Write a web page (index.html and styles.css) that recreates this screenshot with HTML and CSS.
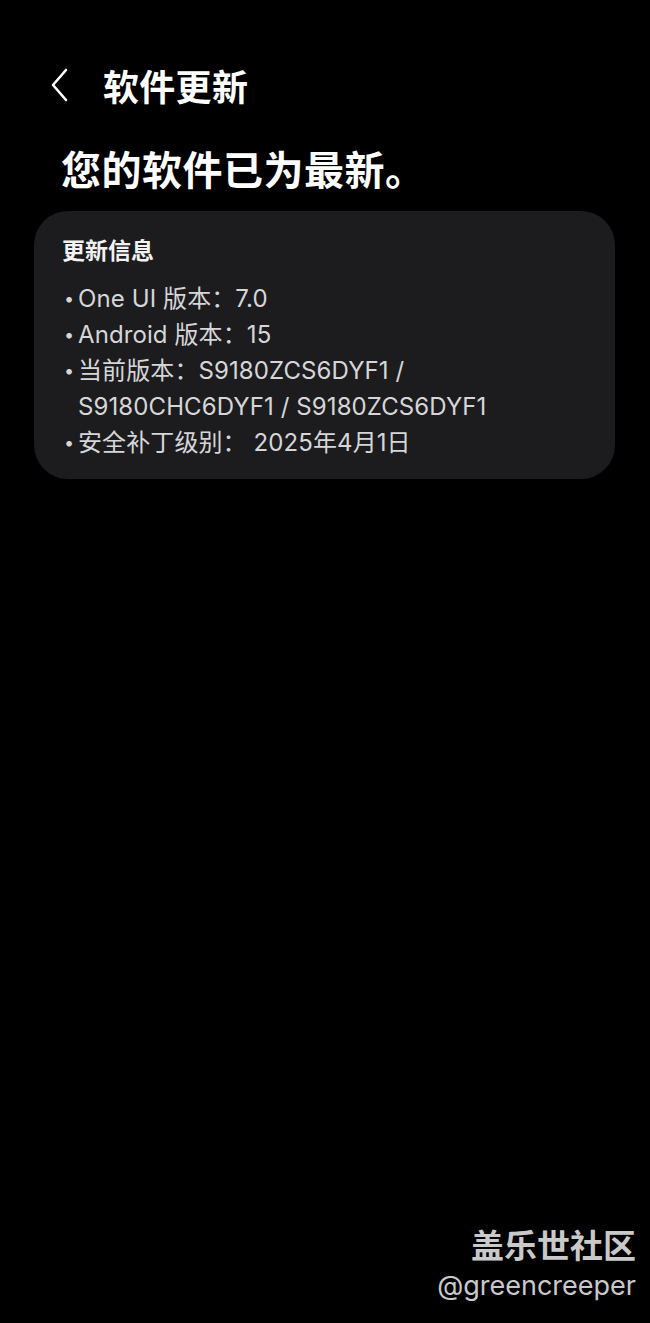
FILE: index.html
```html
<!DOCTYPE html>
<html lang="zh-CN">
<head>
<meta charset="utf-8">
<title>软件更新</title>
<link rel="stylesheet" href="styles.css">
</head>
<body>
<div class="screen">
  <header class="topbar">
    <svg class="back" width="20" height="34" viewBox="0 0 20 34"><path d="M16 2 L3 17 L16 32" fill="none" stroke="#ffffff" stroke-width="2.6" stroke-linecap="round" stroke-linejoin="round"/></svg>
    <span class="title">软件更新</span>
  </header>
  <h1 class="status">您的软件已为最新。</h1>
  <section class="card">
    <h2 class="card-title">更新信息</h2>
    <ul class="info">
      <li><span class="dot">•</span><span>One UI 版本：7.0</span></li>
      <li><span class="dot">•</span><span>Android 版本：15</span></li>
      <li><span class="dot">•</span><span>当前版本：S9180ZCS6DYF1 / S9180CHC6DYF1 / S9180ZCS6DYF1</span></li>
      <li><span class="dot">•</span><span>安全补丁级别： 2025年4月1日</span></li>
    </ul>
  </section>
  <div class="spacer"></div>
  <footer class="watermark">
    <div class="wm-name">盖乐世社区</div>
    <div class="wm-user">@greencreeper</div>
  </footer>
</div>
</body>
</html>
```
FILE: styles.css
```css
html, body {
  margin: 0;
  padding: 0;
  background: #000;
}
body {
  font-family: Inter, "Noto Sans CJK SC", "Noto Sans", sans-serif;
  color: #fff;
}
.screen {
  width: 650px;
  height: 1323px;
  display: flex;
  flex-direction: column;
  box-sizing: border-box;
}
.topbar {
  display: flex;
  align-items: center;
  height: 50px;
  margin-top: 60px;
  padding-left: 50px;
}
.back {
  display: block;
}
.title {
  margin-left: 33px;
  font-size: 36px;
  font-weight: 700;
  letter-spacing: 0.3px;
}
.status {
  margin: 35px 0 0 61px;
  font-size: 40px;
  font-weight: 700;
  line-height: 52px;
  letter-spacing: 0.5px;
}
.card {
  margin: 14px 35px 0 34px;
  background: #1c1c1f;
  border-radius: 34px;
  padding: 24px 20px 18px 28px;
}
.card-title {
  margin: 0;
  font-size: 23px;
  font-weight: 700;
  line-height: 32px;
  color: #f2f2f2;
}
.info {
  list-style: none;
  margin: 14px 0 0;
  padding: 0;
}
.info li {
  display: flex;
  font-size: 24px;
  line-height: 36px;
  color: #d6d6d8;
  letter-spacing: 0.1px;
}
.dot {
  width: 16px;
  flex: none;
  font-size: 18px;
  padding-left: 2px;
  box-sizing: border-box;
}
.spacer {
  flex: 1;
}
.watermark {
  text-align: right;
  padding-right: 14px;
  padding-bottom: 18px;
  color: #c9c9c9;
}
.wm-name {
  font-size: 33px;
  font-weight: 700;
  line-height: 42px;
}
.wm-user {
  font-size: 27px;
  line-height: 38px;
}
```
